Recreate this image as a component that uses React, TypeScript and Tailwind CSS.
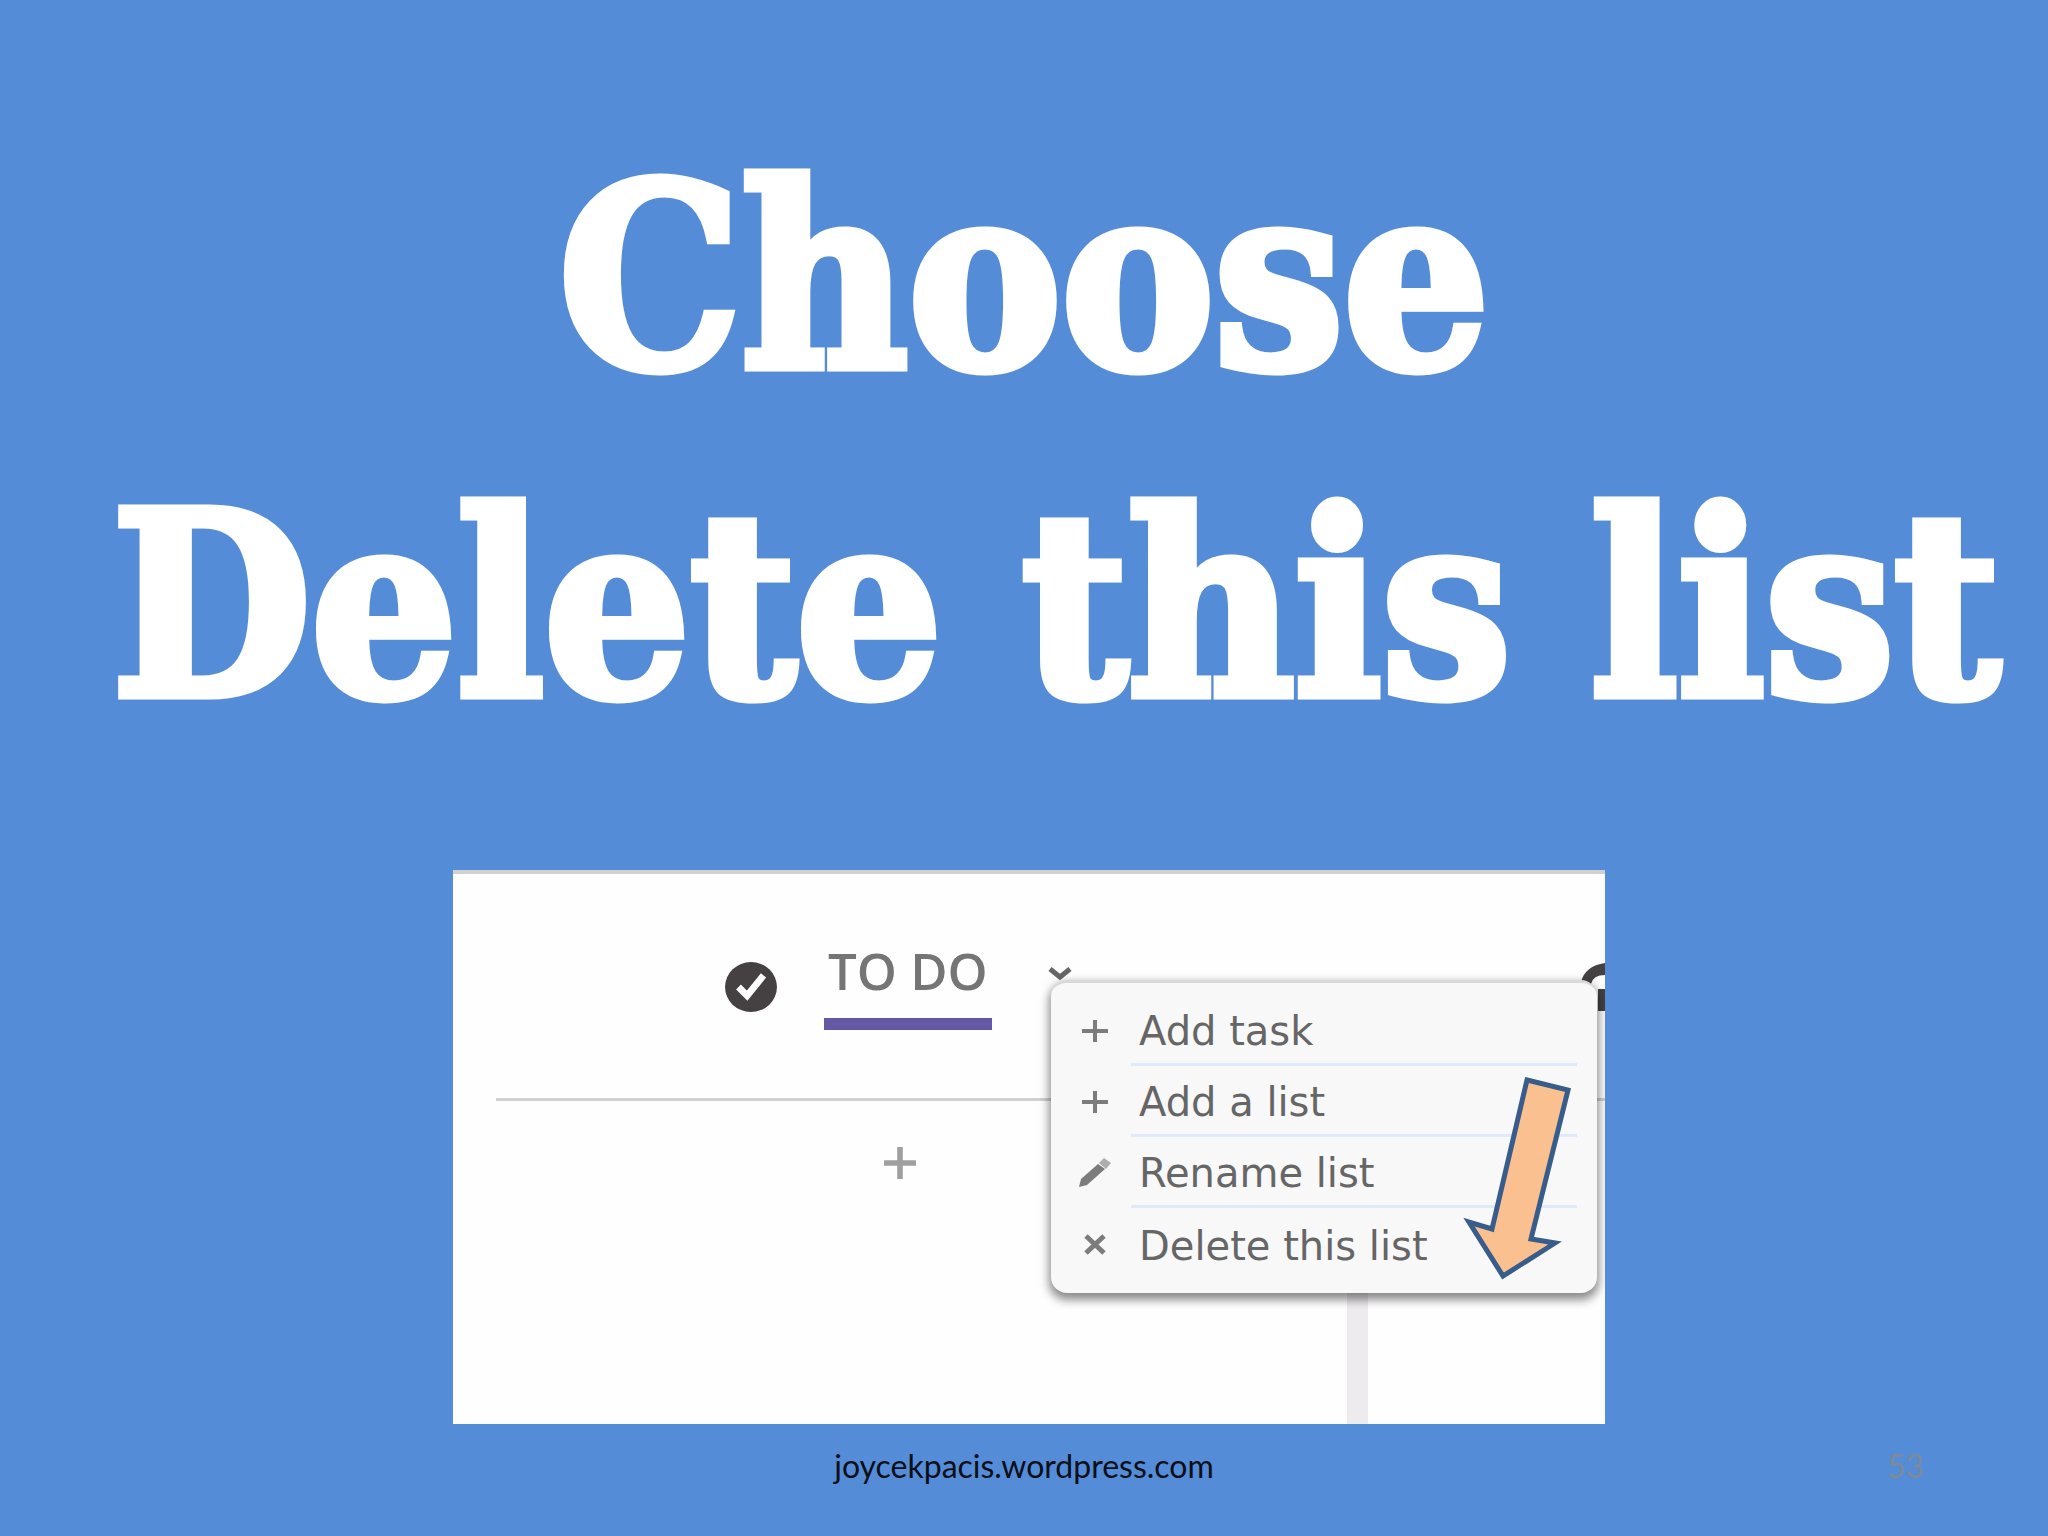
import type { ReactNode } from "react";

const stroke = { fill: "none", stroke: "currentColor" };

function PlusIcon() {
  return (
    <svg viewBox="0 0 32 32" className="size-8" {...stroke} strokeWidth="4" aria-hidden="true">
      <path d="M16 5v22M3 16h26" />
    </svg>
  );
}

function PencilIcon() {
  return (
    <svg viewBox="0 0 32 32" className="size-8" fill="currentColor" aria-hidden="true">
      <path d="M0 30l2-8L19 7l7 5L8 28z" />
      <path d="M20 6l5-5 7 5-5 6z" opacity="0.6" />
    </svg>
  );
}

function CrossIcon() {
  return (
    <svg viewBox="0 0 32 32" className="size-8" {...stroke} strokeWidth="5" aria-hidden="true">
      <path d="M7 8l18 17M25 8L7 25" />
    </svg>
  );
}

const items: { label: string; icon: ReactNode }[] = [
  { label: "Add task", icon: <PlusIcon /> },
  { label: "Add a list", icon: <PlusIcon /> },
  { label: "Rename list", icon: <PencilIcon /> },
  { label: "Delete this list", icon: <CrossIcon /> },
];

function ListMenu() {
  return (
    <ul className="absolute left-[598px] top-[106px] w-[546px] rounded-2xl border-t-3 border-[#d9d9d9] bg-[#f8f8f8] pb-3.5 pl-7 pr-5 pt-3 shadow-[0_5px_10px_2px_rgba(0,0,0,0.45)]">
      {items.map((item, i) => (
        <li key={item.label}>
          <button type="button" className="flex h-[71px] w-full items-center gap-5 text-left">
            <span className="flex w-8 justify-center text-[#7c7c7c]">{item.icon}</span>
            <span
              className={
                i < items.length - 1
                  ? "flex h-full flex-1 items-center border-b-3 border-[#e1eafb] pl-2 pt-1"
                  : "flex h-full flex-1 items-center pl-2 pt-1"
              }
            >
              {item.label}
            </span>
          </button>
        </li>
      ))}
    </ul>
  );
}

function Board() {
  return (
    <section className="relative h-[554px] w-full max-w-[1152px] overflow-hidden border-t-4 border-[#d0d0d0] bg-[#fefefe]">
      <header className="ml-[43px] flex h-[227px] items-start border-b-3 border-[#d0d0ce] pl-[228px] pt-[72px]">
        <svg viewBox="0 0 54 52" className="mt-4 h-[50px] w-[54px]" aria-hidden="true">
          <ellipse cx="27" cy="26" rx="27" ry="26" fill="#454142" />
          <path d="M14 26l9 9 17-21" fill="none" stroke="#fff" strokeWidth="7" />
        </svg>
        <h2 className="ml-[46px] border-b-[12px] border-[#6558a4] px-1 pb-6 font-['Open_Sans'] text-[51px] leading-[48px] font-semibold text-[#757575]">
          TO DO
        </h2>
        <button type="button" aria-label="List options" className="ml-14 mt-5 text-[#666]">
          <svg viewBox="0 0 24 16" className="h-4 w-6" {...stroke} strokeWidth="5" aria-hidden="true">
            <path d="M2 3l10 8 10-8" />
          </svg>
        </button>
      </header>
      <button type="button" aria-label="Add" className="ml-[429px] mt-[46px] block text-[#a0a0a0]">
        <svg viewBox="0 0 36 34" className="h-8 w-9" {...stroke} strokeWidth="6" aria-hidden="true">
          <path d="M18 0v34M1 17h34" />
        </svg>
      </button>
      <div className="absolute bottom-0 left-[894px] h-40 w-[21px] bg-[#edebed]" />
      <svg viewBox="0 0 24 52" className="absolute right-0 top-[88px] h-[52px] w-6" aria-hidden="true">
        <path d="M0 20Q4 4 24 1v12Q12 13 10 22z" fill="#454142" />
        <path d="M17 27h7v22h-7z" fill="#454142" />
      </svg>
      <ListMenu />
      <svg viewBox="0 0 120 210" className="absolute left-[1010px] top-[198px] h-[210px] w-[120px]" aria-hidden="true">
        <path
          d="M64 8L105 18L68 167L92 171L40 204L6 150L29 157Z"
          fill="#fac090"
          stroke="#385d8a"
          strokeWidth="5"
        />
      </svg>
    </section>
  );
}

export default function App() {
  return (
    <main className="flex min-h-screen flex-col items-center bg-[#558cd7]">
      <h1 className="mt-[114px] text-center font-['DejaVu_Serif_Condensed','DejaVu_Serif',serif] text-[255px] leading-[328px] font-bold whitespace-nowrap text-white [-webkit-text-stroke:9px_white]">
        Choose
        <span className="block pl-16">Delete this list</span>
      </h1>
      <div className="mt-[100px] flex w-full justify-center pl-2.5 font-['DejaVu_Sans',sans-serif] text-[40px] text-[#666]">
        <Board />
      </div>
      <footer className="grid w-full grid-cols-3 px-[124px] pt-5 font-[Lato,sans-serif] text-[32px] leading-[44px]">
        <a href="https://joycekpacis.wordpress.com" className="col-start-2 text-center text-[#0a0f18]">
          joycekpacis.wordpress.com
        </a>
        <span className="text-right text-[#7c8a9a]">53</span>
      </footer>
    </main>
  );
}
